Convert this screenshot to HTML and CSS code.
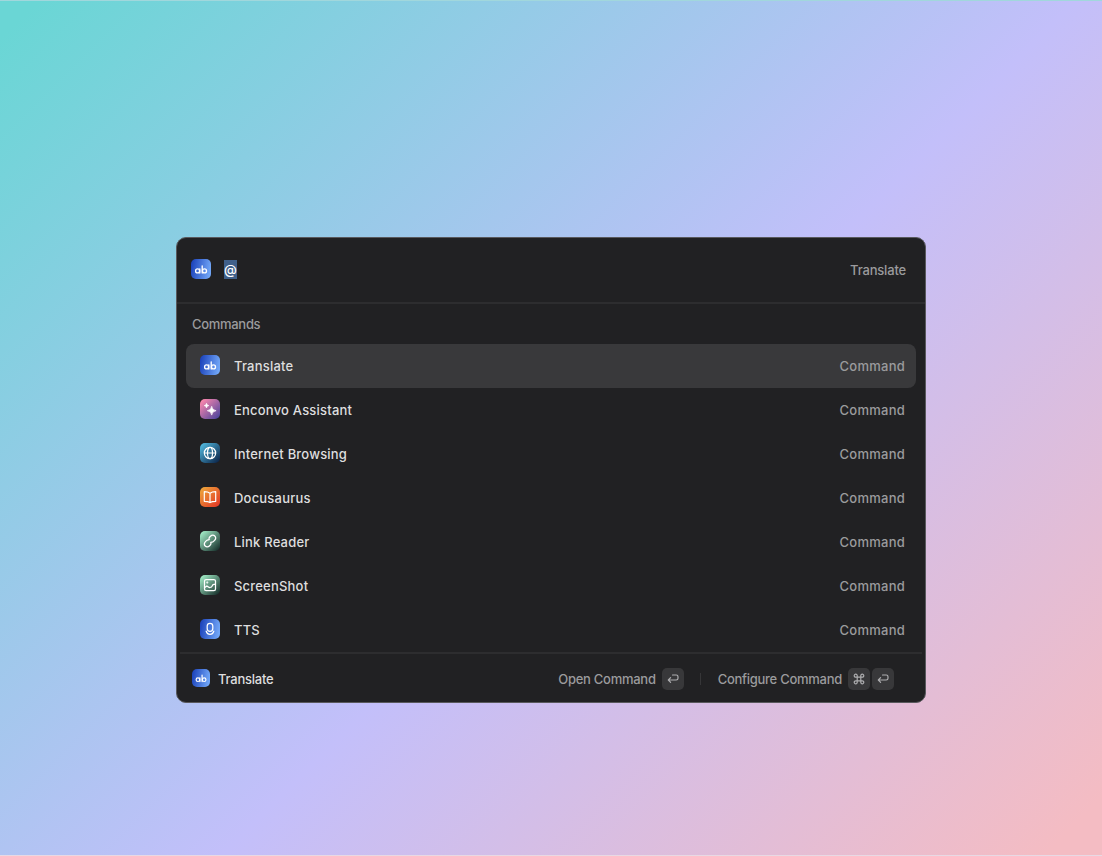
FILE: index.html
```html
<!DOCTYPE html>
<html lang="en">
<head>
<meta charset="utf-8">
<title>Translate</title>
<link rel="stylesheet" href="styles.css">
</head>
<body>
<svg class="defs" aria-hidden="true">
  <symbol id="ab" viewBox="0 0 20 20" fill="none" stroke="#fff" stroke-width="1.35" stroke-linecap="round"><circle cx="6.600" cy="11.900" r="2"/><path d="M8.800 9.800v4.200M11.200 6.800V14"/><circle cx="13.500" cy="11.900" r="2"/></symbol>
  <symbol id="return" viewBox="0 0 12 10" fill="none" stroke="currentColor" stroke-width="1.2" stroke-linecap="round" stroke-linejoin="round"><path d="M5.500 1h3.700c1.100 0 1.800.7 1.800 1.700v1.600C11 5.400 10.300 6 9.200 6H1.300M3.600 3.700 1.300 6l2.300 2.300"/></symbol>
</svg>
<main class="panel">
  <header class="search">
    <span class="icon blue"><svg><use href="#ab"/></svg></span>
    <span class="query">@</span>
    <span class="context">Translate</span>
  </header>
  <section class="results">
    <h2 class="heading">Commands</h2>
    <ul class="list">
      <li class="row selected"><span class="icon blue"><svg><use href="#ab"/></svg></span><span class="name">Translate</span><span class="kind">Command</span></li>
      <li class="row"><span class="icon pink"><svg viewBox="0 0 20 20" fill="#fff" stroke="#fff" stroke-width=".7" stroke-linejoin="round"><path d="M11.700 7.300Q12.100 11.300 16.100 11.700 12.100 12.100 11.700 16.100 11.300 12.100 7.300 11.700 11.300 11.300 11.700 7.300Z"/><path d="M6.500 4.300Q6.700 6.400 8.800 6.600 6.700 6.800 6.500 8.900 6.300 6.800 4.200 6.600 6.300 6.400 6.500 4.300Z"/></svg></span><span class="name">Enconvo Assistant</span><span class="kind">Command</span></li>
      <li class="row"><span class="icon ocean"><svg viewBox="0 0 20 20" fill="none" stroke="#fff" stroke-width="1.2"><circle cx="10" cy="10" r="5.700"/><ellipse cx="10" cy="10" rx="2.500" ry="5.700"/><path d="M4.300 10h11.400"/></svg></span><span class="name">Internet Browsing</span><span class="kind">Command</span></li>
      <li class="row"><span class="icon orange"><svg viewBox="0 0 20 20" fill="none" stroke="#fff" stroke-width="1.2" stroke-linejoin="round"><path d="M10 6.200C8.500 5.100 6.500 4.700 4.300 4.700v9.600c2.200 0 4.200.3 5.700 1.300 1.500-1 3.500-1.300 5.700-1.300V4.700c-2.200 0-4.200.4-5.700 1.500Zm0 0v9.200"/></svg></span><span class="name">Docusaurus</span><span class="kind">Command</span></li>
      <li class="row"><span class="icon green"><svg viewBox="0 0 20 20" fill="none" stroke="#fff" stroke-width="1.3" stroke-linecap="round"><path d="M9.200 8.600c-.4-1-.2-1.900.5-2.600l1-1a2.800 2.800 0 0 1 4.100 0 2.800 2.800 0 0 1 0 4.100l-1.300 1.300c-.6.6-1.200.8-1.900.7M10.800 11.400c.4 1 .2 1.900-.5 2.600l-1 1a2.800 2.800 0 0 1-4.100 0 2.800 2.800 0 0 1 0-4.100l1.300-1.300c.6-.6 1.200-.8 1.900-.7"/></svg></span><span class="name">Link Reader</span><span class="kind">Command</span></li>
      <li class="row"><span class="icon green"><svg viewBox="0 0 20 20" fill="none" stroke="#fff" stroke-width="1.25" stroke-linecap="round" stroke-linejoin="round"><rect x="4.500" y="4.500" width="11" height="11" rx="1.600"/><path d="M4.700 12.600l2.200-1.700 2.300 1.700 2.300-.6 1.500-2.300 2.300-.5"/><circle cx="7.300" cy="7.400" r=".4"/></svg></span><span class="name">ScreenShot</span><span class="kind">Command</span></li>
      <li class="row"><span class="icon blue"><svg viewBox="0 0 20 20" fill="none" stroke="#fff" stroke-width="1.250" stroke-linecap="round"><rect x="7.200" y="4.300" width="5.600" height="8" rx="2.800"/><path d="M6.200 12.200c.6 2 1.900 3.100 3.800 3.100s3.200-1.100 3.800-3.100"/></svg></span><span class="name">TTS</span><span class="kind">Command</span></li>
    </ul>
  </section>
  <footer class="actions">
    <span class="icon small blue"><svg><use href="#ab"/></svg></span>
    <span class="current">Translate</span>
    <span class="action open">Open Command</span>
    <kbd class="key"><svg class="enter"><use href="#return"/></svg></kbd>
    <span class="separator"></span>
    <span class="action configure">Configure Command</span>
    <kbd class="key"><svg class="cmd" viewBox="0 0 12 12" fill="none" stroke="currentColor" stroke-width="1.200"><path d="M4.200 4.200V2.800a1.500 1.500 0 1 0-1.500 1.400h6.600a1.500 1.500 0 1 0-1.500-1.400v6.400a1.500 1.500 0 1 0 1.500-1.400H2.700a1.500 1.500 0 1 0 1.500 1.400Z"/></svg></kbd>
    <kbd class="key second"><svg class="enter"><use href="#return"/></svg></kbd>
  </footer>
</main>
</body>
</html>
```
FILE: styles.css
```css
* { box-sizing: border-box; }
html { height: 100%; }
body {
  margin: 0;
  height: 856px;
  display: flex;
  justify-content: center;
  padding-top: 236px;
  border-top: 1px solid #a1d7dc;
  border-bottom: 1px solid #e8d9e4;
  overflow: hidden;
  background: linear-gradient(135deg, #6ad6d5 2%, #c3bffa 55%, #f4bcc3 97%);
  font-family: Inter, "Liberation Sans", sans-serif;
  font-size: 13px;
  color: #dededf;
}
.defs { position: absolute; width: 0; height: 0; }
.panel {
  width: 750px;
  height: 466px;
  display: flex;
  flex-direction: column;
  border: 1px solid #59595d;
  border-radius: 10px;
  background: #212123;
  overflow: hidden;
}
.search {
  height: 66px;
  flex: none;
  display: flex;
  align-items: center;
  padding: 0 19px 0 14px;
  border-bottom: 2px solid #2d2d2f;
}
.icon {
  width: 20px;
  height: 20px;
  flex: none;
  margin-bottom: 1.300px;
  border-radius: 5px;
  overflow: hidden;
}
.icon svg { display: block; width: 100%; height: 100%; }
.small { width: 18px; height: 18px; }
.blue { background: linear-gradient(100deg, #1c43bb 5%, #70a5f6 90%); }
.pink { background: linear-gradient(135deg, #fb87ad 8%, #4b459d 95%); }
.ocean { background: linear-gradient(135deg, #52bae0 5%, #0b2449 95%); }
.orange { background: linear-gradient(135deg, #eea63b 5%, #e23d26 90%); }
.green { background: linear-gradient(135deg, #a4efc9 5%, #172f2b 95%); }
.query {
  margin: 0 0 2px 13px;
  width: 13px;
  height: 19px;
  line-height: 18px;
  background: #40608a;
  color: #fff;
  font-weight: 500;
}
.context { margin-left: auto; color: #9b9b9d; font-weight: 500; letter-spacing: -.18px; }
.results { height: 348px; flex: none; padding: 0 9px; }
.heading {
  margin: 0;
  padding-left: 6px;
  height: 40px;
  line-height: 41px;
  font-size: 13px;
  font-weight: 500;
  letter-spacing: -.3px;
  color: #9b9b9d;
}
.list { margin: 0; padding: 0; list-style: none; }
.row {
  height: 44px;
  display: flex;
  align-items: center;
  padding: 0 11px 0 14px;
  border-radius: 8px;
}
.selected { background: #39393b; }
.name { margin-left: 14px; font-weight: 500; letter-spacing: .2px; }
.kind { margin-left: auto; color: #9b9b9d; font-weight: 500; letter-spacing: .25px; }
.actions {
  flex: 1;
  margin: 0 3px;
  padding: 1px 28px 0 12px;
  display: flex;
  align-items: center;
  border-top: 2px solid #2d2d2f;
}
.current { margin-left: 8px; font-weight: 500; letter-spacing: -.23px; }
.action { color: #9b9b9d; font-weight: 500; letter-spacing: -.27px; }
.open { margin-left: auto; }
.key {
  width: 22px;
  height: 22px;
  flex: none;
  display: grid;
  place-items: center;
  margin-left: 6px;
  border-radius: 5px;
  background: #38383a;
  color: #adadaf;
}
.second { margin-left: 2px; }
.enter { width: 12px; height: 10px; }
.cmd { width: 12px; height: 12px; }
.separator { width: 1px; height: 12px; margin: 0 17px 0 16px; background: #363638; }
```
